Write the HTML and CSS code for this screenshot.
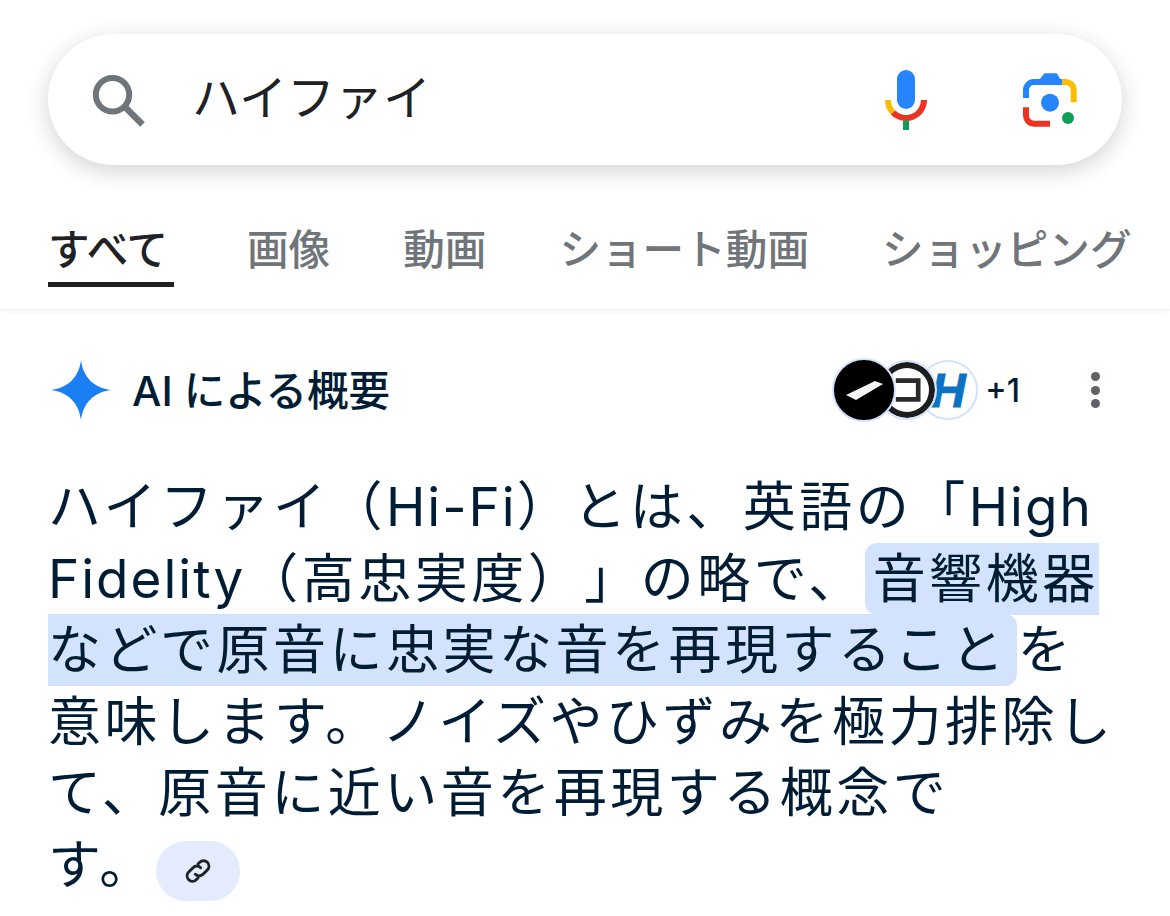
FILE: index.html
```html
<!DOCTYPE html>
<html lang="ja">
<head>
<meta charset="utf-8">
<title>ハイファイ</title>
<link rel="stylesheet" href="styles.css">
</head>
<body>
<header class="search-wrap">
  <div class="search">
    <svg class="ico-search" viewBox="0 0 56 56" aria-hidden="true"><circle cx="22.500" cy="22.700" r="16.700" fill="none" stroke="#70757a" stroke-width="6"/><path d="M34.500 34.500 L52.500 52.500" stroke="#70757a" stroke-width="6.500" fill="none"/></svg>
    <span class="query">ハイファイ</span>
    <svg class="ico-mic" viewBox="0 0 52 68" aria-hidden="true">
      <rect x="17" y="4" width="18" height="39" rx="9" fill="#2684fc"/>
      <path d="M8 34 A18 18 0 0 0 13 46.500" fill="none" stroke="#fbbc04" stroke-width="6"/>
      <path d="M13 46.500 A18 18 0 0 0 44 34" fill="none" stroke="#ea3323" stroke-width="6"/>
      <rect x="23" y="54.500" width="6" height="9.500" fill="#0f9d58"/>
    </svg>
    <svg class="ico-lens" viewBox="0 0 60 60" aria-hidden="true">
      <path d="M6 28 V20 A8 8 0 0 1 14 12 H42" fill="none" stroke="#2684fc" stroke-width="6"/>
      <path d="M20 9 L24.300 3.300 H36.700 L44 15 H20 Z" fill="#2684fc"/>
      <path d="M42 12 H46 A8 8 0 0 1 53.700 20 V32.300" fill="none" stroke="#fbbc04" stroke-width="6"/>
      <path d="M6 37.300 V46 A8 8 0 0 0 14 53.700 H30" fill="none" stroke="#ea3323" stroke-width="6"/>
      <circle cx="30" cy="32.700" r="9" fill="#2684fc"/>
      <circle cx="48" cy="48" r="6" fill="#0f9d58"/>
    </svg>
  </div>
</header>
<nav class="tabs">
  <a class="tab active">すべて</a>
  <a class="tab">画像</a>
  <a class="tab">動画</a>
  <a class="tab">ショート動画</a>
  <a class="tab">ショッピング</a>
</nav>
<main class="overview">
  <div class="ov-head">
    <svg class="spark" viewBox="0 0 60 60" aria-hidden="true"><path d="M30 0 C32 17 43 28 60 30 C43 32 32 43 30 60 C28 43 17 32 0 30 C17 28 28 17 30 0 Z" fill="#1a7ff2"/></svg>
    <h2 class="ov-title">AI による概要</h2>
    <div class="sources">
      <span class="av av1"><svg viewBox="0 0 60 60" aria-hidden="true"><path d="M12 35 L41 21 L49 24 L22 40 Z" fill="#f4f4f4"/></svg></span>
      <span class="av av2"><svg viewBox="0 0 60 60" aria-hidden="true"><path d="M18 20 H42 V40 H18" fill="none" stroke="#2a2a2a" stroke-width="5"/></svg></span>
      <span class="av av3">H</span>
      <span class="more-count">+1</span>
    </div>
    <div class="kebab" aria-hidden="true"><i></i><i></i><i></i></div>
  </div>
  <p class="answer">ハイファイ（<span class="latin">Hi-Fi</span>）とは、英語の「<span class="latin">High Fidelity</span>（高忠実度）」の略で、<mark class="hl">音響機器などで原音に忠実な音を再現すること</mark>を意味します。ノイズやひずみを極力排除して、原音に近い音を再現する概念で<span class="last">す。<span class="chip"><svg viewBox="0 0 24 24" aria-hidden="true"><path d="M10 14.500a4 4 0 0 0 5.700 0l3.300-3.300a4 4 0 0 0-5.700-5.700L12 6.800M14 9.500a4 4 0 0 0-5.700 0L5 12.800a4 4 0 0 0 5.700 5.700L12 17.200" fill="none" stroke="#202124" stroke-width="2.200" stroke-linecap="round"/></svg></span></span></p>
</main>
</body>
</html>
```
FILE: styles.css
```css
* { box-sizing: border-box; }
html, body { margin: 0; padding: 0; background: #fff; }
body {
  width: 1170px;
  height: 916px;
  overflow: hidden;
  font-family: "Inter", "Noto Sans CJK JP", sans-serif;
  color: #001d35;
}
.search-wrap { padding: 34px 48px 0; }
.search {
  height: 131px;
  border-radius: 66px;
  background: #fff;
  box-shadow: 0 6px 22px rgba(32, 33, 36, 0.2);
  display: flex;
  align-items: center;
  padding-left: 42px;
}
.ico-search { width: 56px; height: 56px; flex: none; }
.query {
  margin-left: 46px;
  padding-bottom: 12px;
  font-family: "Noto Sans CJK JP", sans-serif;
  font-size: 48px;
  color: #202124;
  flex: 1;
}
.ico-mic { width: 52px; height: 68px; flex: none; margin-right: 88px; }
.ico-lens { width: 60px; height: 60px; flex: none; margin-right: 42px; }
.tabs {
  display: flex;
  margin-top: 52px;
  padding-left: 48px;
  height: 93px;
  gap: 73px;
  white-space: nowrap;
  overflow: hidden;
  border-bottom: 1px solid #f3f3f3;
  box-shadow: 0 4px 5px -3px rgba(32, 33, 36, 0.07);
}
.tab {
  font-family: "Noto Sans CJK JP", sans-serif;
  font-size: 41.600px;
  font-weight: 500;
  color: #70757a;
  height: 70px;
  line-height: 60px;
  flex: none;
}
.tab.active {
  color: #202124;
  border-bottom: 5px solid #202124;
  width: 126px;
}
.overview { padding: 0 48px; }
.ov-head {
  display: flex;
  align-items: center;
  height: 80px;
  margin-top: 40px;
}
.spark { width: 60px; height: 60px; flex: none; margin-left: 3px; }
.ov-title {
  margin: 0 0 0 21px;
  padding-bottom: 5px;
  font-size: 41.500px;
  font-weight: 500;
  flex: 1;
}
.sources { display: flex; align-items: center; }
.av {
  width: 60px;
  height: 60px;
  border-radius: 50%;
  border: 2px solid #d3e3fd;
  display: flex;
  align-items: center;
  justify-content: center;
  overflow: hidden;
  flex: none;
}
.av svg { width: 100%; height: 100%; display: block; }
.av + .av { margin-left: -19px; }
.av1 { background: #000; position: relative; z-index: 3; width: 64px; height: 64px; }
.av2 { background: #fff; position: relative; z-index: 2; box-shadow: inset 0 0 0 6px #1d1d1d; }
.av3 {
  background: #fff;
  position: relative;
  z-index: 1;
  font-family: "Liberation Sans", sans-serif;
  font-weight: 700;
  font-style: italic;
  font-size: 48px;
  color: #0b72c4;
  -webkit-text-stroke: 1px #0b72c4;
}
.more-count { font-size: 32px; font-weight: 500; margin-left: 7px; }
.kebab { display: flex; flex-direction: column; gap: 4.600px; margin-left: 71px; margin-right: 22px; }
.kebab i { width: 9px; height: 9px; border-radius: 50%; background: #5f6368; display: block; }
.answer {
  margin: 42px 0 0;
  width: 1074px;
  font-size: 53px;
  line-height: 71.600px;
  letter-spacing: 3.500px;
  text-spacing-trim: space-all;
}
.latin { letter-spacing: 2px; }
.hl {
  background: #d3e3fd;
  color: inherit;
  border-radius: 12px;
  padding: 4px 10px 4px 8px;
}
.last { white-space: nowrap; }
.chip {
  display: inline-flex;
  align-items: center;
  justify-content: center;
  width: 84px;
  height: 60px;
  border-radius: 30px;
  background: #e3ebfc;
  vertical-align: middle;
  margin-left: 0;
  position: relative;
  top: 1px;
}
.chip svg { width: 32px; height: 32px; }
```
